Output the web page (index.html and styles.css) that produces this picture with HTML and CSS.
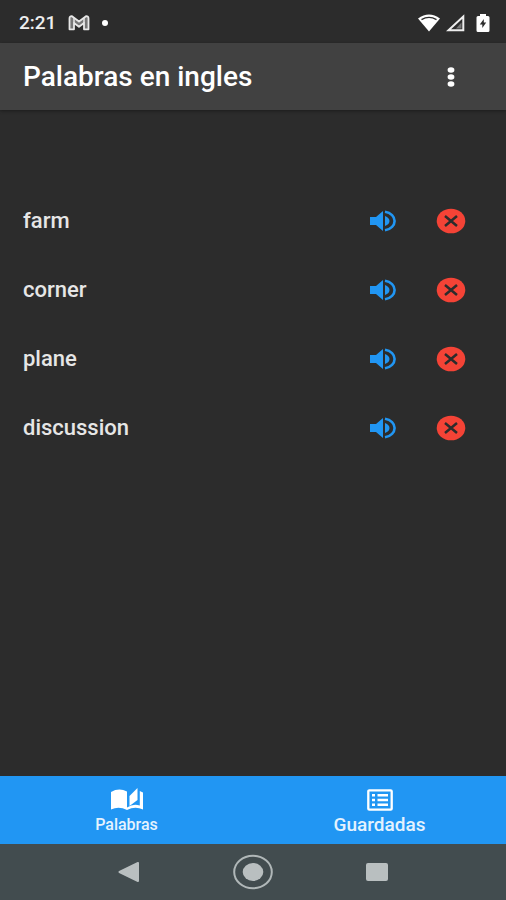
FILE: index.html
```html
<!DOCTYPE html>
<html lang="es">
<head>
<meta charset="utf-8">
<meta name="viewport" content="width=device-width, initial-scale=1">
<title>Palabras en ingles</title>
<link rel="stylesheet" href="styles.css">
</head>
<body>
<svg class="defs" aria-hidden="true">
  <symbol id="volume" viewBox="0 0 28 24">
    <path fill="currentColor" d="M1 8h6l7-6v20l-7-6H1zM16 7c3 1 4.500 3 4.500 5s-1.500 4-4.500 5z"/>
    <path fill="none" stroke="currentColor" stroke-width="2.600" d="M16 2.800c6 1 9.600 5 9.600 9.200s-3.600 8.200-9.600 9.200"/>
  </symbol>
  <symbol id="remove" viewBox="0 0 30 26">
    <ellipse cx="15" cy="13" rx="14.300" ry="12.300" fill="currentColor"/>
    <path fill="none" stroke="#2c2c2c" stroke-width="2.500" d="M9 8l12 10M21 8L9 18"/>
  </symbol>
</svg>
<div class="screen">
  <header class="status">
    <div class="status-side">
      <span class="clock">2:21</span>
      <svg width="22" height="16" viewBox="0 0 22 16" aria-hidden="true">
        <path d="M1.500 3.500Q1.500 1 4 1.200L11 6.500 18 1.200Q20.500 1 20.500 3.500V14.300H16V8L11 11.800 6 8V14.300H1.500z" fill="#777" stroke="#e8e8e8" stroke-width="1.800" stroke-linejoin="round"/>
        <path d="M6 8V3M16 8V3" stroke="#e8e8e8" stroke-width="1.500"/>
      </svg>
      <span class="dot"></span>
    </div>
    <div class="status-side">
      <svg width="22" height="18" viewBox="0 0 22 18" aria-hidden="true">
        <path d="M0 4.500Q11-3.500 22 4.500L11 17.500z" fill="#fff"/>
        <path d="M3.500 5.600Q11 1 18.500 5.600" fill="none" stroke="#2c2c2c" stroke-width="1.300"/>
      </svg>
      <svg width="20" height="18" viewBox="0 0 20 18" aria-hidden="true">
        <path d="M2.500 16.300L17.300 2.500V16.300z" fill="none" stroke="#eee" stroke-width="2"/>
        <path d="M10 14.500L15.500 8.500V14.500z" fill="#777"/>
      </svg>
      <svg class="battery" width="14" height="18" viewBox="0 0 14 18" aria-hidden="true">
        <path d="M4 0h6v2h2q1.500 0 1.500 1.500v13Q13.500 18 12 18H2Q.5 18 .5 16.500v-13Q.5 2 2 2h2z" fill="#fff"/>
        <path d="M7.800 5L3.800 10.500H6.300V14L10.200 8.500H7.800z" fill="#2c2c2c"/>
      </svg>
    </div>
  </header>
  <div class="appbar">
    <h1>Palabras en ingles</h1>
    <button class="icon-button" type="button" aria-label="Menú">
      <svg width="8" height="20" viewBox="0 0 8 20" fill="#fff" aria-hidden="true"><ellipse cx="4" cy="3" rx="3.400" ry="2.800"/><ellipse cx="4" cy="10" rx="3.400" ry="2.800"/><ellipse cx="4" cy="17" rx="3.400" ry="2.800"/></svg>
    </button>
  </div>
  <main>
    <ul class="words">
      <li><span class="word">farm</span>
        <button class="icon-button listen" type="button" aria-label="Escuchar farm"><svg width="28" height="24"><use href="#volume"/></svg></button>
        <button class="icon-button remove" type="button" aria-label="Quitar farm"><svg width="30" height="26"><use href="#remove"/></svg></button></li>
      <li><span class="word">corner</span>
        <button class="icon-button listen" type="button" aria-label="Escuchar corner"><svg width="28" height="24"><use href="#volume"/></svg></button>
        <button class="icon-button remove" type="button" aria-label="Quitar corner"><svg width="30" height="26"><use href="#remove"/></svg></button></li>
      <li><span class="word">plane</span>
        <button class="icon-button listen" type="button" aria-label="Escuchar plane"><svg width="28" height="24"><use href="#volume"/></svg></button>
        <button class="icon-button remove" type="button" aria-label="Quitar plane"><svg width="30" height="26"><use href="#remove"/></svg></button></li>
      <li><span class="word">discussion</span>
        <button class="icon-button listen" type="button" aria-label="Escuchar discussion"><svg width="28" height="24"><use href="#volume"/></svg></button>
        <button class="icon-button remove" type="button" aria-label="Quitar discussion"><svg width="30" height="26"><use href="#remove"/></svg></button></li>
    </ul>
  </main>
  <nav class="tabs">
    <a href="#palabras">
      <svg width="32" height="24" viewBox="0 0 32 24" aria-hidden="true">
        <path fill="#fff" d="M0 4Q8-.5 16 3.500V22Q8 18 0 21.500z"/>
        <path fill="#fff" d="M18.500 8L26.500 0V12L18.500 18z"/>
        <path fill="#fff" d="M28.800 3L32 4.500V21.500Q24 18 16 22V19.500Q22 15.500 28.800 17.500z"/>
      </svg>
      <span>Palabras</span>
    </a>
    <a href="#guardadas" class="current">
      <svg width="26" height="24" viewBox="0 0 26 24" aria-hidden="true">
        <rect x="1.300" y="2.300" width="23.400" height="19.400" rx="1" fill="none" stroke="#fff" stroke-width="2.300"/>
        <path fill="#fff" d="M5 6h3v2.500H5zM10.500 6H21v2.500H10.500zM5 10.800h3v2.500H5zM10.500 10.800H21v2.500H10.500zM5 15.500h3V18H5zM10.500 15.500H21V18H10.500z"/>
      </svg>
      <span>Guardadas</span>
    </a>
  </nav>
  <div class="system">
    <button class="icon-button" type="button" aria-label="Atrás"><svg width="22" height="20" viewBox="0 0 22 20"><path d="M1.500 10L20 1V19z" fill="#b9bfc0" stroke="#b9bfc0" stroke-width="2" stroke-linejoin="round"/></svg></button>
    <button class="icon-button" type="button" aria-label="Inicio"><svg width="40" height="36" viewBox="0 0 40 36"><ellipse cx="20" cy="18" rx="18.800" ry="16.300" fill="none" stroke="#b0b7b8" stroke-width="2"/><ellipse cx="20" cy="18" rx="10.300" ry="9" fill="#b9bfc0"/></svg></button>
    <button class="icon-button" type="button" aria-label="Recientes"><svg width="22" height="20" viewBox="0 0 22 20"><rect y="1" width="22" height="18" rx="2" fill="#b9bfc0"/></svg></button>
  </div>
</div>
</body>
</html>
```

FILE: styles.css
```css
* {
  box-sizing: border-box;
}

body {
  margin: 0;
  background: #2c2c2c;
  color: #fff;
  font-family: Roboto, "Liberation Sans", sans-serif;
}

svg {
  display: block;
}

.defs {
  position: absolute;
  width: 0;
  height: 0;
}

.screen {
  display: flex;
  flex-direction: column;
  min-height: 100vh;
}

.status,
.status-side,
.appbar,
.words li {
  display: flex;
  align-items: center;
}

.status {
  justify-content: space-between;
  padding: 13px 16px 10px 19px;
}

.status-side {
  height: 20px;
  gap: 6px;
}

.clock {
  margin-right: 6px;
  color: #eee;
  font-size: 19px;
  font-weight: 500;
  line-height: 20px;
}

.dot {
  width: 6px;
  height: 6px;
  margin-left: 6px;
  border-radius: 50%;
  background: #fff;
}

.battery {
  margin-left: 4px;
}

.appbar {
  justify-content: space-between;
  padding: 10px 27px 9px 23px;
  background: #414141;
  box-shadow: 0 1px 3px #1c1c1c;
}

h1 {
  margin: 0;
  font-size: 28px;
  font-weight: 500;
  line-height: 32px;
}

.icon-button {
  display: flex;
  align-items: center;
  justify-content: center;
  width: 56px;
  height: 48px;
  padding: 0;
  border: 0;
  background: none;
}

main {
  flex: 1;
  padding-top: 76px;
}

.words {
  margin: 0;
  padding: 0 27px 0 23px;
  list-style: none;
}

.words li {
  height: 69px;
  gap: 12px;
}

.word {
  flex: 1;
  color: #e6e6e6;
  font-size: 22px;
  font-weight: 500;
  line-height: 28px;
}

.listen {
  color: #2196f3;
}

.remove {
  color: #f44336;
}

.tabs {
  display: grid;
  grid-template-columns: 1fr 1fr;
  height: 68px;
  background: #2196f3;
}

.tabs a {
  display: flex;
  flex-direction: column;
  align-items: center;
  gap: 3px;
  padding-top: 12px;
  color: #e4f2fe;
  font-size: 16px;
  font-weight: 500;
  line-height: 20px;
  text-decoration: none;
}

.tabs .current {
  font-size: 19px;
}

.system {
  display: flex;
  align-items: center;
  justify-content: center;
  gap: 68px;
  height: 56px;
  background: #424c4f;
}
```
